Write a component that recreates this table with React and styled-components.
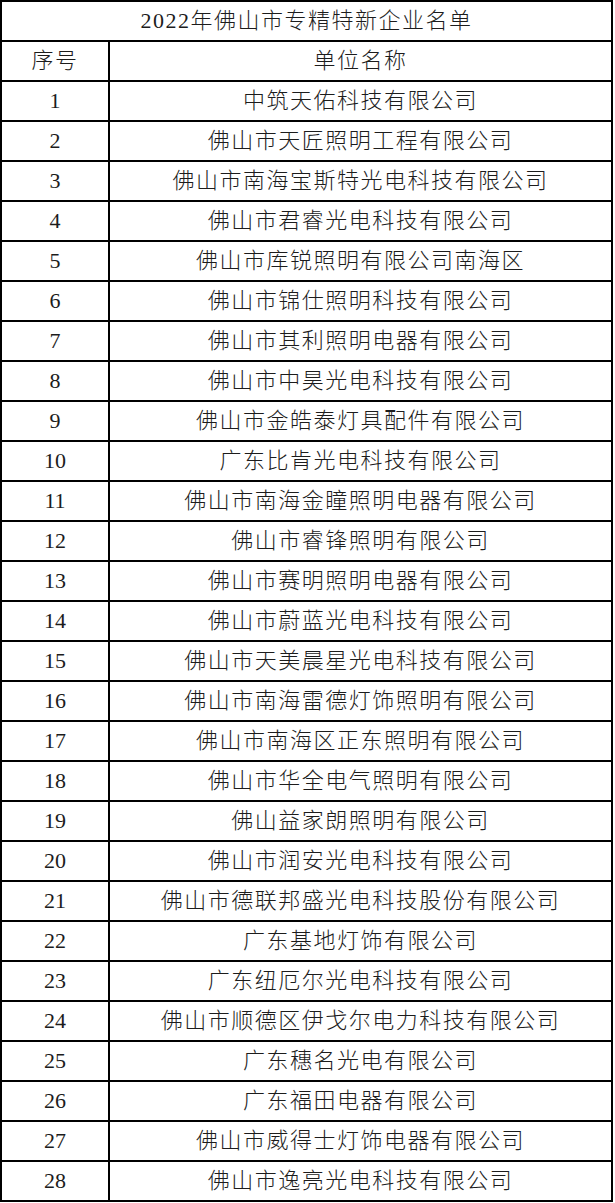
import styled, { createGlobalStyle } from 'styled-components';

const Global = createGlobalStyle`
  html, body {
    margin: 0;
    padding: 0;
    background: #fff;
  }
`;

const Table = styled.table`
  border-collapse: collapse;
  width: 613px;
  table-layout: fixed;
  color: #1c1c1c;
  font-family: "Liberation Serif", "Noto Sans CJK SC", serif;
  font-size: 22px;
  font-weight: 300;
`;

const Row = styled.tr`
  height: 40px;
`;

const Cell = styled.td`
  border: 2px solid #000;
  padding: 0;
  text-align: center;
  vertical-align: middle;
  line-height: 1;
  letter-spacing: ${(p) => (p.$num ? '0' : '1.5px')};
  white-space: nowrap;
`;

const companies = [
  '中筑天佑科技有限公司',
  '佛山市天匠照明工程有限公司',
  '佛山市南海宝斯特光电科技有限公司',
  '佛山市君睿光电科技有限公司',
  '佛山市库锐照明有限公司南海区',
  '佛山市锦仕照明科技有限公司',
  '佛山市其利照明电器有限公司',
  '佛山市中昊光电科技有限公司',
  '佛山市金皓泰灯具配件有限公司',
  '广东比肯光电科技有限公司',
  '佛山市南海金瞳照明电器有限公司',
  '佛山市睿锋照明有限公司',
  '佛山市赛明照明电器有限公司',
  '佛山市蔚蓝光电科技有限公司',
  '佛山市天美晨星光电科技有限公司',
  '佛山市南海雷德灯饰照明有限公司',
  '佛山市南海区正东照明有限公司',
  '佛山市华全电气照明有限公司',
  '佛山益家朗照明有限公司',
  '佛山市润安光电科技有限公司',
  '佛山市德联邦盛光电科技股份有限公司',
  '广东基地灯饰有限公司',
  '广东纽厄尔光电科技有限公司',
  '佛山市顺德区伊戈尔电力科技有限公司',
  '广东穗名光电有限公司',
  '广东福田电器有限公司',
  '佛山市威得士灯饰电器有限公司',
  '佛山市逸亮光电科技有限公司',
];

export default function App() {
  return (
    <>
      <Global />
      <Table>
        <colgroup>
          <col style={{ width: '108px' }} />
          <col />
        </colgroup>
        <tbody>
          <Row>
            <Cell colSpan={2}>2022年佛山市专精特新企业名单</Cell>
          </Row>
          <Row>
            <Cell>序号</Cell>
            <Cell>单位名称</Cell>
          </Row>
          {companies.map((name, i) => (
            <Row key={name}>
              <Cell $num>{i + 1}</Cell>
              <Cell>{name}</Cell>
            </Row>
          ))}
        </tbody>
      </Table>
    </>
  );
}
